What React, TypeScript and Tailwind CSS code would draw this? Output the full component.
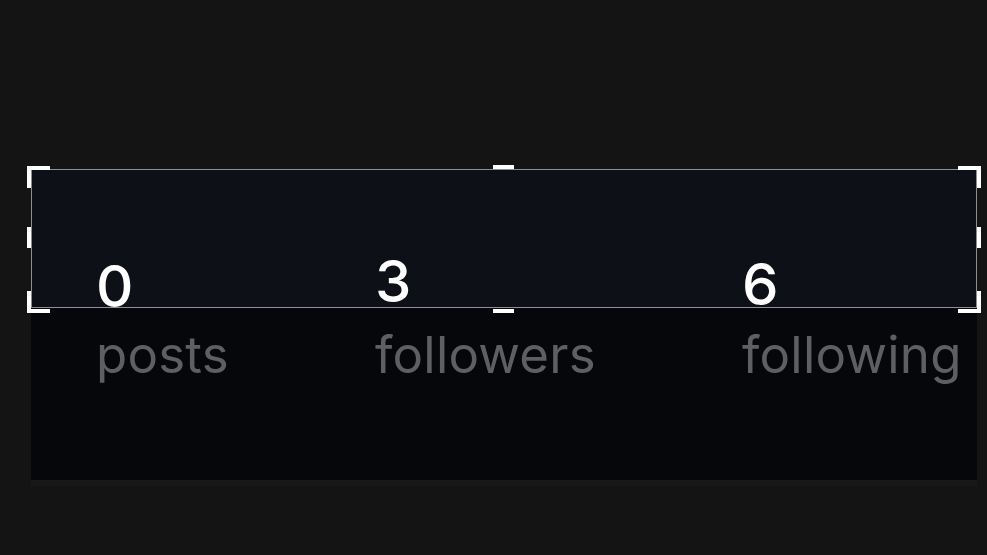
import React from "react";

const stats = [
  { n: "0", label: "posts", w: "w-[279px]", nMb: "mb-0" },
  { n: "3", label: "followers", w: "w-[367px]", nMb: "mb-[5px]" },
  { n: "6", label: "following", w: "w-[235px]", nMb: "mb-[2px]" },
];

export default function App() {
  return (
    <div
      className="w-[987px] h-[555px] bg-[#141414] pt-[169px] pl-[31px] overflow-hidden"
      style={{ fontFamily: "Inter, 'Noto Sans', sans-serif" }}
    >
      <div className="relative w-[946px] h-[311px] bg-[#05070a]">
        {/* selection box overlay */}
        <div className="absolute left-0 top-0 w-[946px] h-[139px] border border-[#8c8f94] bg-[#0d1016]">
          <div className="absolute -left-[5px] -top-[4px] w-[23px] h-[22px] border-l-4 border-t-4 border-white" />
          <div className="absolute -right-[5px] -top-[4px] w-[23px] h-[22px] border-r-4 border-t-4 border-white" />
          <div className="absolute -left-[5px] -bottom-[6px] w-[23px] h-[22px] border-l-4 border-b-4 border-white" />
          <div className="absolute -right-[5px] -bottom-[6px] w-[23px] h-[22px] border-r-4 border-b-4 border-white" />
          <div className="absolute left-[461px] -top-[5px] w-[21px] h-[4px] bg-white" />
          <div className="absolute left-[461px] -bottom-[6px] w-[21px] h-[4px] bg-white" />
          <div className="absolute -left-[5px] top-[57px] w-[4px] h-[21px] bg-white" />
          <div className="absolute -right-[5px] top-[57px] w-[4px] h-[21px] bg-white" />
        </div>
        {/* stats */}
        <div className="relative flex pl-[65px]">
          {stats.map((s) => (
            <div key={s.label} className={`${s.w} flex flex-col`}>
              <div className="h-[146px] flex flex-col justify-end">
                <div className={`${s.nMb} text-[58px] leading-none font-medium text-white`}>{s.n}</div>
              </div>
              <div className="mt-[14px] text-[51px] leading-none text-[#5e5f60] tracking-[0.2px]">
                {s.label}
              </div>
            </div>
          ))}
        </div>
      </div>
      <div className="w-[946px] h-[6px] bg-[#181818]" />
    </div>
  );
}
